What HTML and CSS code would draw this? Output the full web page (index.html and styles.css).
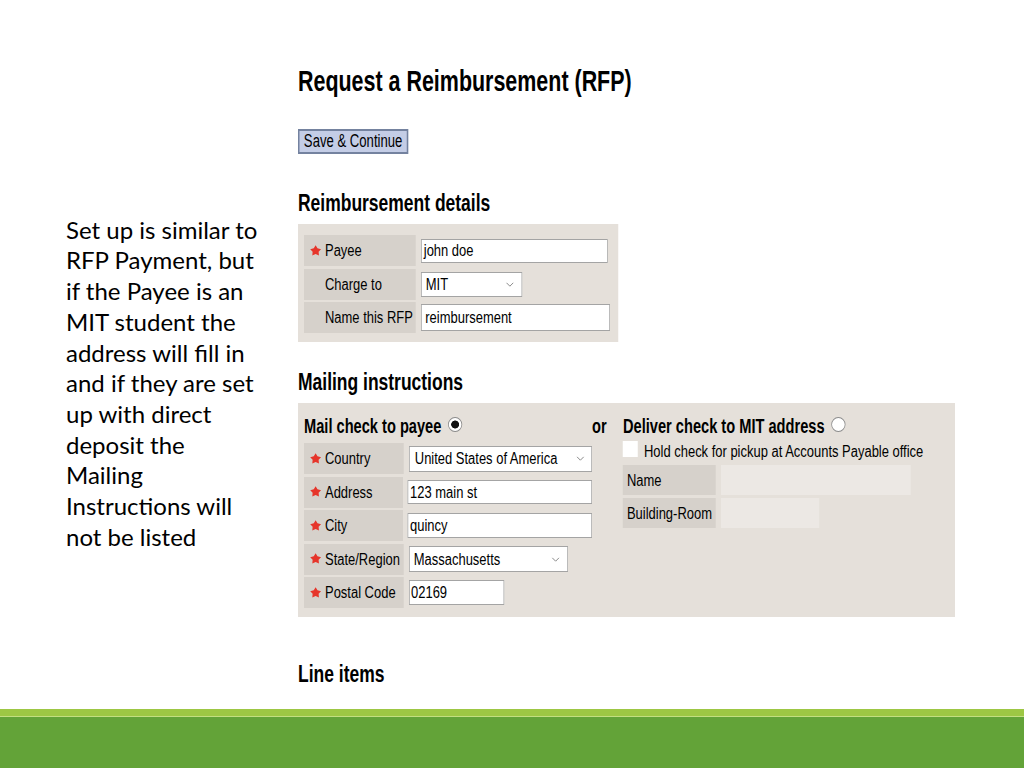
FILE: index.html
```html
<!DOCTYPE html>
<html lang="en">
<head>
<meta charset="utf-8">
<title>Request a Reimbursement (RFP)</title>
<link rel="stylesheet" href="styles.css">
</head>
<body>
<div class="slide">
  <div class="main">
    <div class="note">Set up is similar to<br>RFP Payment, but<br>if the Payee is an<br>MIT student the<br>address will fill in<br>and if they are set<br>up with direct<br>deposit the<br>Mailing<br>Instructions will<br>not be listed</div>
    <div class="form">
      <h1 class="title">Request a Reimbursement (RFP)</h1>
      <button class="btn" type="button">Save &amp; Continue</button>

      <h2 class="heading">Reimbursement details</h2>
      <div class="panel panel-details">
        <div class="row">
          <div class="label label-wide"><span class="req"><svg class="star" viewBox="0 0 10 10" preserveAspectRatio="none"><polygon points="5,0.2 6.65,3.03 9.8,3.75 7.66,6.17 7.95,9.5 5,8.1 2.05,9.5 2.34,6.17 0.2,3.75 3.35,3.03"/></svg></span>Payee</div>
          <div class="field f-payee">john doe</div>
        </div>
        <div class="row">
          <div class="label label-wide"><span class="req"></span>Charge to</div>
          <div class="field select f-charge"><span>MIT</span><svg class="chev" viewBox="0 0 11 5"><path d="M1 0.8 L5.5 4.2 L10 0.8"/></svg></div>
        </div>
        <div class="row">
          <div class="label label-wide"><span class="req"></span>Name this RFP</div>
          <div class="field f-name">reimbursement</div>
        </div>
      </div>

      <h2 class="heading heading-mailing">Mailing instructions</h2>
      <div class="panel panel-mailing">
        <div class="mail-left">
          <div class="head-row">Mail check to payee <span class="radio radio-on"></span></div>
          <div class="rows">
            <div class="row row-mail">
              <div class="label label-narrow"><span class="req"><svg class="star" viewBox="0 0 10 10" preserveAspectRatio="none"><polygon points="5,0.2 6.65,3.03 9.8,3.75 7.66,6.17 7.95,9.5 5,8.1 2.05,9.5 2.34,6.17 0.2,3.75 3.35,3.03"/></svg></span>Country</div>
              <div class="field select f-country"><span>United States of America</span><svg class="chev" viewBox="0 0 11 5"><path d="M1 0.8 L5.5 4.2 L10 0.8"/></svg></div>
            </div>
            <div class="row row-mail">
              <div class="label label-narrow"><span class="req"><svg class="star" viewBox="0 0 10 10" preserveAspectRatio="none"><polygon points="5,0.2 6.65,3.03 9.8,3.75 7.66,6.17 7.95,9.5 5,8.1 2.05,9.5 2.34,6.17 0.2,3.75 3.35,3.03"/></svg></span>Address</div>
              <div class="field f-address">123 main st</div>
            </div>
            <div class="row row-mail">
              <div class="label label-narrow"><span class="req"><svg class="star" viewBox="0 0 10 10" preserveAspectRatio="none"><polygon points="5,0.2 6.65,3.03 9.8,3.75 7.66,6.17 7.95,9.5 5,8.1 2.05,9.5 2.34,6.17 0.2,3.75 3.35,3.03"/></svg></span>City</div>
              <div class="field f-city">quincy</div>
            </div>
            <div class="row row-mail">
              <div class="label label-narrow"><span class="req"><svg class="star" viewBox="0 0 10 10" preserveAspectRatio="none"><polygon points="5,0.2 6.65,3.03 9.8,3.75 7.66,6.17 7.95,9.5 5,8.1 2.05,9.5 2.34,6.17 0.2,3.75 3.35,3.03"/></svg></span>State/Region</div>
              <div class="field select f-state"><span>Massachusetts</span><svg class="chev" viewBox="0 0 11 5"><path d="M1 0.8 L5.5 4.2 L10 0.8"/></svg></div>
            </div>
            <div class="row row-mail">
              <div class="label label-narrow"><span class="req"><svg class="star" viewBox="0 0 10 10" preserveAspectRatio="none"><polygon points="5,0.2 6.65,3.03 9.8,3.75 7.66,6.17 7.95,9.5 5,8.1 2.05,9.5 2.34,6.17 0.2,3.75 3.35,3.03"/></svg></span>Postal Code</div>
              <div class="field f-postal">02169</div>
            </div>
          </div>
        </div>
        <div class="or">or</div>
        <div class="mail-right">
          <div class="head-row">Deliver check to MIT address <span class="radio"></span></div>
          <div class="hold"><span class="check"></span>Hold check for pickup at Accounts Payable office</div>
          <div class="rows rows-right">
            <div class="row row-right">
              <div class="label label-mit">Name</div>
              <div class="field disabled f-mitname"></div>
            </div>
            <div class="row row-right">
              <div class="label label-mit">Building-Room</div>
              <div class="field disabled f-room"></div>
            </div>
          </div>
        </div>
      </div>

      <h2 class="heading heading-lines">Line items</h2>
    </div>
  </div>
  <div class="band">
    <div class="band-light"></div>
    <div class="band-line"></div>
    <div class="band-dark"></div>
  </div>
</div>
</body>
</html>
```

FILE: styles.css
```css
html, body {
  margin: 0;
  padding: 0;
  background: #fff;
}

body {
  font-family: "Liberation Sans", Arial, sans-serif;
  color: #000;
  overflow: hidden;
}

.slide {
  width: 1024px;
  height: 768px;
  display: flex;
  flex-direction: column;
  overflow: hidden;
  background: #fff;
}

.main {
  flex: 1;
  min-height: 0;
  display: flex;
  overflow: hidden;
}

/* left slide text */
.note {
  flex: none;
  width: 298px;
  box-sizing: border-box;
  padding: 214.7px 0 0 66px;
  font-family: Lato, "Open Sans", sans-serif;
  font-size: 24px;
  line-height: 30.7px;
  color: #000;
  white-space: nowrap;
}

/* screenshot of the form – horizontally condensed */
.form {
  flex: none;
  width: 876px;
  padding-top: 64px;
  transform: scaleX(0.75);
  transform-origin: 0 0;
}

.title {
  margin: 0;
  font-size: 28.6px;
  line-height: 34px;
  font-weight: bold;
}

.btn {
  display: block;
  margin: 31px 0 0;
  width: 147px;
  height: 25px;
  box-sizing: border-box;
  padding: 0;
  border: 2px solid #74829f;
  background: #c4cde6;
  color: #000;
  font-family: "Liberation Sans", Arial, sans-serif;
  font-size: 17.5px;
}

.heading {
  margin: 35px 0 7px;
  font-size: 23.3px;
  line-height: 28px;
  font-weight: bold;
}

.heading-mailing {
  margin-top: 26px;
}

.heading-lines {
  margin-top: 42.6px;
}

.panel {
  box-sizing: border-box;
  background: #e5e0da;
}

.panel-details {
  width: 427px;
  padding: 11px 0 9px 8px;
  display: flex;
  flex-direction: column;
  gap: 2.5px;
}

.row {
  display: flex;
  align-items: center;
  gap: 6.7px;
  height: 31px;
  font-size: 17.3px;
}

.label {
  align-self: stretch;
  box-sizing: border-box;
  display: flex;
  align-items: center;
  padding-left: 8px;
  background: #d6d1cb;
  white-space: nowrap;
}

.label-wide {
  width: 149px;
}

.label-narrow {
  width: 133px;
}

.label-mit {
  width: 124px;
  padding-left: 5.3px;
}

.req {
  flex: none;
  width: 20px;
  display: flex;
  align-items: center;
}

.star {
  flex: none;
  width: 15px;
  height: 11px;
  margin-bottom: 1px;
  fill: #e6352b;
}

.field {
  box-sizing: border-box;
  display: flex;
  align-items: center;
  border: 1px solid #a4a4a4;
  background: #fff;
  padding-left: 3px;
  white-space: nowrap;
}

.select {
  justify-content: space-between;
}

.chev {
  width: 11px;
  height: 5px;
  fill: none;
  stroke: #7a7a7a;
  stroke-width: 1;
}

.f-payee { width: 249px; height: 24px; }
.f-charge { width: 135px; height: 25px; padding-left: 5.7px; padding-right: 10px; }
.f-name { width: 252px; height: 27px; padding-left: 5px; }

.panel-mailing {
  width: 876px;
  padding: 9px 0 9px 8px;
  display: flex;
}

.mail-left {
  flex: none;
  width: 384px;
  display: flex;
  flex-direction: column;
}

.head-row {
  height: 28px;
  display: flex;
  align-items: center;
  gap: 8px;
  font-size: 19.5px;
  font-weight: bold;
  white-space: nowrap;
}

.radio {
  flex: none;
  width: 19px;
  height: 15px;
  box-sizing: border-box;
  border: 1px solid #8a8a8a;
  border-radius: 50%;
  background: #fff;
  margin-bottom: 3px;
}

.radio-on {
  background: radial-gradient(ellipse at center, #111 0 40%, #fff 47%);
}

.rows {
  margin-top: 3px;
  display: flex;
  flex-direction: column;
  gap: 2.5px;
}

.f-country { width: 244px; height: 26px; padding-left: 7px; padding-right: 9px; }
.f-address { width: 248px; height: 24px; padding-left: 2px; }
.f-city { width: 248px; height: 25px; padding-left: 2px; }
.f-state { width: 212px; height: 26px; padding-left: 5.7px; padding-right: 10px; }
.f-postal { width: 127px; height: 25px; padding-left: 2px; }

.or {
  flex: none;
  width: 41.3px;
  height: 28px;
  line-height: 28px;
  font-size: 19.5px;
  font-weight: bold;
}

.mail-right {
  flex: none;
  display: flex;
  flex-direction: column;
}

.head-row .radio {
  margin-left: 1px;
}

.hold {
  height: 22px;
  line-height: 22px;
  display: flex;
  align-items: flex-start;
  gap: 8px;
  font-size: 17.3px;
  white-space: nowrap;
}

.check {
  flex: none;
  width: 20px;
  height: 16px;
  margin-top: 1px;
  background: #fff;
}

.rows-right {
  margin-top: 3px;
  gap: 3px;
}

.row-right {
  height: 30px;
}

.disabled {
  align-self: stretch;
  border: none;
  background: #ece8e4;
}

.f-mitname { width: 253px; }
.f-room { width: 131px; }

/* green footer band */
.band {
  flex: none;
  height: 59px;
  display: flex;
  flex-direction: column;
}

.band-light {
  height: 7px;
  background: #9dc744;
}

.band-line {
  height: 1px;
  background: #c3df80;
}

.band-dark {
  flex: 1;
  background: #63a338;
}
```
